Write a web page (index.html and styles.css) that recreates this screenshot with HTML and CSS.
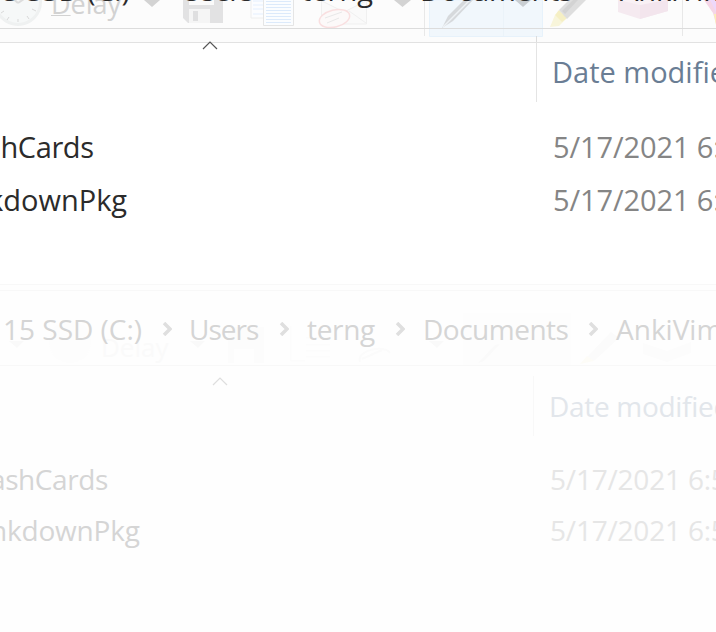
FILE: index.html
```html
<!DOCTYPE html>
<html lang="en">
<head>
<meta charset="utf-8">
<title>Documents</title>
<link rel="stylesheet" href="styles.css">
</head>
<body>
<main class="screen">
  <section class="window window-front">
    <div class="toolbar">
      <svg class="tools" viewBox="0 0 716 43" aria-hidden="true">
        <circle cx="18" cy="2" r="22.5" fill="#f6f8f8" stroke="#eff1f1" stroke-width="3"/>
        <path d="M18 3L27-3M18 3L11-3" stroke="#dcdcdc" stroke-width="2"/>
        <path d="M4 11l-3 2M9 17l-2 3M18 19v3M27 16l2 3M32 9l4 2" stroke="#d9d9d9"/>
        <path d="M144 0h16l-8 7z M394 0h17l-8.500 7z" fill="#d3d3d3"/>
        <path d="M183 0h40v23h-35l-5-5z" fill="#e2e2e3"/>
        <path d="M189 0h25v5h-25z" fill="#fafafa"/>
        <path d="M189 9h21v14h-21z" fill="#f5f5f5"/>
        <path d="M193 11h5v10h-5z" fill="#dfdfe0"/>
        <path d="M251-4h20v22h-20z" fill="#fcfdff" stroke="#eee"/>
        <path d="M253 1h12M253 5h10M253 9h10M253 14h10" stroke="#e4effe"/>
        <path d="M263.500-4h30v29.500h-30z" fill="#fbfdff" stroke="#e5e5e5"/>
        <path d="M266 1.500h25M266 4.500h25M266 7.500h25M266 10.500h25M266 13.500h25M266 16.500h25M266 19.500h25M266 22.500h25" stroke="#dceafb"/>
        <path d="M321.500-2h45v26h-45zM322 1l22 11 22-11M349 11l17 12" fill="#fafafa" stroke="#f0f0f0"/>
        <ellipse cx="334.500" cy="18.500" rx="15.500" ry="8.500" transform="rotate(-14 334.500 18.500)" fill="#fcf9f9" stroke="#f9dfe0" stroke-width="1.500"/>
        <path d="M325 18l17-6M327 23l12-5" stroke="#e8e8e8"/>
        <path d="M424.500 0v36M682.500 0v36" stroke="#e8e8e8"/>
        <path d="M429.500 0h113v36.500h-113z" fill="#f1f7fc" stroke="#e7f2fb"/>
        <path d="M503.500 0v36" stroke="#ebf3f9"/>
        <path d="M442 28l6-12L464 0h9L453 21z" fill="#d6d9dc"/>
        <path d="M443 27L470 0" stroke="#eef2f5" stroke-width="1.500"/>
        <path d="M515 0h16l-8 7z" fill="#c9ced2"/>
        <path d="M550 27l5-12 11 4-7 7z" fill="#f8f5da"/>
        <path d="M555 15l4-5 8 8-5 4z" fill="#f5efc4"/>
        <path d="M559 10L569 0h17l-19 19z" fill="#dedede"/>
        <path d="M562 11L573 0h5l-13 14z" fill="#d3d3d3"/>
        <path d="M618 0h50v11l-28 8-22-7z" fill="#f5eaf0"/>
        <path d="M640 5l28-6v12l-28 8z" fill="#f3e5ed"/>
        <path d="M640 5l-22-5h48z" fill="#f9f1f5"/>
        <path d="M704 0h12v24l-3-11z" fill="#f5d6e7"/>
        <path d="M710 0h6v12z" fill="#eed8fa"/>
        <path d="M714 14h2v11z" fill="#fcefb7"/>
        <path d="M536.500 36v7" stroke="#dcdcdc"/>
      </svg>
      <span class="delay"><u>D</u>elay</span>
      <div class="crumbs"><span class="drive">15 SSD (C:)</span><span class="users">Users</span><span>terng</span><span class="docs">Documents</span><span>AnkiVim</span></div>
    </div>
    <div class="head"><svg class="sort" viewBox="0 0 16 9"><path d="M1 8l7-7 7 7"/></svg><span class="date-title">Date modified</span></div>
    <div class="rows">
      <div class="row"><span class="name">shCards</span><span class="date">5/17/2021 6:5</span></div>
      <div class="row"><span class="name package">kdownPkg</span><span class="date">5/17/2021 6:5</span></div>
    </div>
  </section>
  <section class="window window-faded">
    <div class="toolbar">
      <svg class="tools" viewBox="0 0 716 82" aria-hidden="true">
        <path d="M0 5.500h716M0 10.500h716" stroke="none"/>
        <path d="M0 .5h716M0 6.500h716" stroke="#f8f8f8"/>
        <path d="M9 57h15l-7 7zM190 57h15l-7 7zM429 57h15l-7 7zM546 57h15l-7 7z" fill="#f9f9f9"/>
        <circle cx="70" cy="58" r="21" fill="#fdfdfd"/>
        <path d="M228 43h36v36h-36z" fill="#fcfcfc"/>
        <path d="M234 65h20v14h-20z" fill="#fefefe"/>
        <path d="M291 42v35h14M306 54h24M306 61h24M306 67h24M306 73h24" fill="none" stroke="#fbfbfb"/>
        <path d="M360 78c-4-12 25-18 30-9M362 75l20-9" fill="none" stroke="#fbfbfb" stroke-width="2"/>
        <path d="M463 29h108v62h-108z" fill="#fdfdfd"/>
        <path d="M478 79l17-18 5-1-16 17z" fill="#fafafa"/>
        <path d="M587 73l24-25 8 6-25 23z" fill="#fbfbfb"/>
        <path d="M580 80l7-8 7 5z" fill="#fdfcf7"/>
        <path d="M643 59l24 8 24-9v11l-24 9-24-8z" fill="#fcfcfc"/>
        <path d="M0 81.500h716" stroke="#f8f8f8"/>
      </svg>
      <span class="delay">Delay</span>
      <div class="crumbs">
        <span class="drive">15 SSD (C:)</span>
        <svg class="chevron" viewBox="0 0 10 14"><path d="M2 1l6 6-6 6"/></svg>
        <span class="users">Users</span>
        <svg class="chevron" viewBox="0 0 10 14"><path d="M2 1l6 6-6 6"/></svg>
        <span class="terng">terng</span>
        <svg class="chevron" viewBox="0 0 10 14"><path d="M2 1l6 6-6 6"/></svg>
        <span class="docs">Documents</span>
        <svg class="chevron" viewBox="0 0 10 14"><path d="M2 1l6 6-6 6"/></svg>
        <span>AnkiVim</span>
      </div>
    </div>
    <div class="head"><svg class="sort" viewBox="0 0 16 9"><path d="M1 8l7-7 7 7"/></svg><span class="date-title">Date modified</span></div>
    <div class="rows">
      <div class="row"><span class="name">ashCards</span><span class="date">5/17/2021 6:5</span></div>
      <div class="row"><span class="name package">nkdownPkg</span><span class="date">5/17/2021 6:5</span></div>
    </div>
  </section>
</main>
</body>
</html>
```
FILE: styles.css
```css
* { box-sizing: border-box; }
body { margin: 0; background: #fefefe; font-family: "Open Sans", "Noto Sans", sans-serif; }
.screen { width: 716px; height: 632px; overflow: hidden; }
.window { overflow: hidden; white-space: nowrap; }
.toolbar { position: relative; overflow: hidden; }
.tools { display: block; width: 716px; }
.crumbs { position: absolute; left: 0; display: grid; }
.delay { position: absolute; }
.head, .row { display: grid; }
.name { justify-self: start; letter-spacing: -.4px; }
.sort { position: relative; grid-column: 2; width: 16px; height: 9px; fill: none; stroke-width: 1.2; }

.window-front { height: 284px; font-size: 29px; color: #2b2b2b; background: #fff; }
.window-front .toolbar { height: 43px; background: #fcfcfc; border-bottom: 1px solid #e2e2e2; }
.window-front .toolbar::after { content: ""; position: absolute; top: 28px; left: 0; width: 100%; height: 1px; background: #dcdcdc; }
.window-front .tools { height: 43px; }
.window-front .delay { left: 51px; top: -16px; font-size: 27px; line-height: 40px; color: #d2d2d2; }
.window-front .delay u { text-decoration-thickness: 1px; text-underline-offset: 1px; }
.window-front .crumbs { top: -30px; line-height: 40px; grid-template-columns: 181px 120px 119px 200px 110px; }
.window-front .drive { margin-left: -14px; }
.window-front .users { letter-spacing: -1px; }
.window-front .docs { letter-spacing: -.3px; }
.window-front .head { height: 77px; grid-template-columns: 202px 334px 180px; }
.window-front .sort { margin-top: -2px; stroke: #555; }
.window-front .date-title { grid-column: 3; height: 60px; margin-top: -1px; padding-left: 15px; line-height: 60px; color: #6a7d94; border-left: 1px solid #e4e4e4; }
.window-front .row { height: 53px; line-height: 54px; grid-template-columns: 553px 163px; }
.window-front .name { margin-left: -13px; }
.window-front .package { margin-left: -12px; letter-spacing: 0; }
.window-front .date { color: #858585; letter-spacing: -.1px; }

.window-faded { height: 348px; font-size: 28px; color: #d5d5d5; }
.window-faded .toolbar { height: 82px; }
.window-faded .tools { height: 82px; }
.window-faded .delay { left: 101px; top: 45px; font-size: 26px; line-height: 36px; color: #fafafa; }
.window-faded .crumbs { top: 8px; line-height: 74px; align-items: center; grid-template-columns: 162px 27px 90px 28px 88px 28px 165px 28px 110px; }
.window-faded .drive { margin-left: 3px; }
.window-faded .users { letter-spacing: -1px; }
.window-faded .terng { letter-spacing: -.3px; }
.window-faded .docs { letter-spacing: -.5px; }
.chevron { width: 10px; height: 14px; fill: none; stroke: #dfdfdf; stroke-width: 3.5; }
.window-faded .head { height: 88px; grid-template-columns: 212px 321px 183px; }
.window-faded .sort { margin-top: 11px; stroke: #dedede; }
.window-faded .date-title { grid-column: 3; height: 60px; margin-top: 10px; padding-left: 15px; line-height: 60px; letter-spacing: -.3px; color: #e2e6eb; border-left: 1px solid #f8f8f8; }
.window-faded .row { height: 51px; line-height: 51px; grid-template-columns: 550px 166px; }
.window-faded .name { margin-left: -10px; }
.window-faded .package { letter-spacing: -.2px; }
.window-faded .date { color: #e6e6e6; letter-spacing: -.2px; }
```
